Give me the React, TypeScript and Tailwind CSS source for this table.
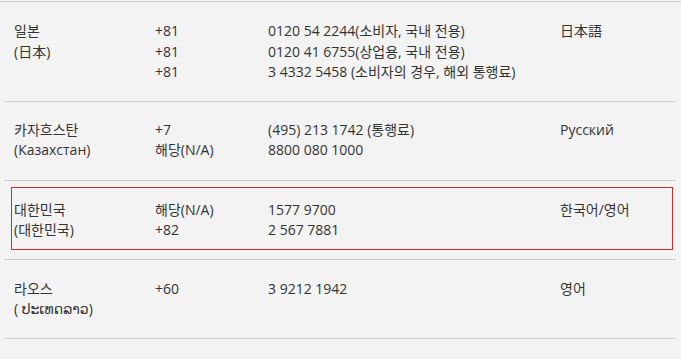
import React from "react";

type Row = {
  country: string[];
  codes: string[];
  numbers: string[];
  lang: string;
  highlight?: boolean;
  pad: string;
};

const rows: Row[] = [
  {
    country: ["일본", "(日本)"],
    codes: ["+81", "+81", "+81"],
    numbers: [
      "0120 54 2244(소비자, 국내 전용)",
      "0120 41 6755(상업용, 국내 전용)",
      "3 4332 5458 (소비자의 경우, 해외 통행료)",
    ],
    lang: "日本語",
    pad: "pt-[19px] pb-[18px]",
  },
  {
    country: ["카자흐스탄", "(Казахстан)"],
    codes: ["+7", "해당(N/A)"],
    numbers: ["(495) 213 1742 (통행료)", "8800 080 1000"],
    lang: "Русский",
    pad: "pt-[18px] pb-[19px]",
  },
  {
    country: ["대한민국", "(대한민국)"],
    codes: ["해당(N/A)", "+82"],
    numbers: ["1577 9700", "2 567 7881"],
    lang: "한국어/영어",
    highlight: true,
    pad: "",
  },
  {
    country: ["라오스", "( ປະເທດລາວ)"],
    codes: ["+60"],
    numbers: ["3 9212 1942"],
    lang: "영어",
    pad: "pt-[19px] pb-[18px]",
  },
];

function Lines({ items }: { items: string[] }) {
  return (
    <div className="flex flex-col">
      {items.map((t, i) => (
        <span key={i} className="h-[20.5px] leading-[20.5px] whitespace-nowrap">
          {t}
        </span>
      ))}
    </div>
  );
}

export default function App() {
  return (
    <div
      className="h-[359px] w-[681px] overflow-hidden bg-[#f3f3f3] text-[14px] text-[#333]"
      style={{ fontFamily: '"Open Sans", "Noto Sans CJK KR", "DejaVu Sans", sans-serif' }}
    >
      <div className="mt-px border-t border-[#cfcfcf]" />
      <div className="mx-[4px] w-[672px]">
        {rows.map((r, i) => {
          const grid = (
            <div className="grid grid-cols-[141px_113px_292px_1fr]">
              <Lines items={r.country} />
              <Lines items={r.codes} />
              <Lines items={r.numbers} />
              <Lines items={[r.lang]} />
            </div>
          );
          return (
            <div key={i} className="border-b border-[#cfcfcf]">
              {r.highlight ? (
                <div className="pt-[6px] pb-[9px]">
                  <div className="ml-[7px] mr-[3px] border border-[#d42a2a] pt-[12px] pb-[8px] pl-[2px]">
                    {grid}
                  </div>
                </div>
              ) : (
                <div className={`pl-[10px] ${r.pad}`}>{grid}</div>
              )}
            </div>
          );
        })}
      </div>
    </div>
  );
}
